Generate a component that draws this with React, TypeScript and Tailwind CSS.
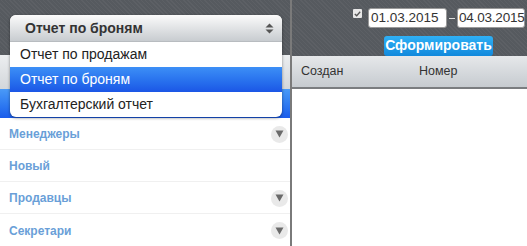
import React from "react";

const groups = [
  { name: "Менеджеры", arrow: true },
  { name: "Новый", arrow: false },
  { name: "Продавцы", arrow: true },
  { name: "Секретари", arrow: true },
];

const reports = ["Отчет по продажам", "Отчет по броням", "Бухгалтерский отчет"];

function ArrowBadge() {
  return (
    <div className="w-[17px] h-[17px] rounded-full bg-[#e9e9e9] flex items-center justify-center">
      <svg width="9" height="8" viewBox="0 0 9 8">
        <path d="M0.5 0.5 L8.5 0.5 L4.5 7.5 Z" fill="#6a6a6a" />
      </svg>
    </div>
  );
}

export default function App() {
  return (
    <div className="w-[527px] h-[246px] flex overflow-hidden bg-white font-['Liberation_Sans',Arial,sans-serif]">
      {/* left column */}
      <div className="relative w-[292px] flex flex-col border-r-2 border-[#7a7a7a]">
        <div className="h-[56px] bg-[#565a5f] bg-[repeating-linear-gradient(45deg,rgba(255,255,255,0.04)_0_1px,transparent_1px_3px)]"></div>
        <div className="h-[34px] bg-gradient-to-b from-[#eceef0] to-[#d3d7db]"></div>
        <div className="h-[30px] bg-gradient-to-b from-[#4a9af7] to-[#1b5ceb]"></div>
        {groups.map((g, i) => (
          <div
            key={g.name}
            className={`h-[32px] shrink-0 flex items-center justify-between pl-[9px] pr-[2px] pt-[1px] ${i < groups.length - 1 ? "border-b border-[#f0f0f0]" : ""}`}
          >
            <span className="text-[12px] font-bold text-[#6a9fd8]">{g.name}</span>
            {g.arrow && <ArrowBadge />}
          </div>
        ))}

        {/* open select */}
        <div className="absolute left-[10px] top-[15px] w-[272px] rounded-[6px] bg-white shadow-[0_1px_3px_rgba(0,0,0,0.45)] overflow-hidden">
          <div className="h-[27px] flex items-center justify-between pl-[15px] pr-[8px] bg-gradient-to-b from-[#fbfbfb] to-[#c8ccd0] border-b border-[#b8bcc0]">
            <span className="text-[14px] font-bold text-[#333]">Отчет по броням</span>
            <svg width="9" height="11" viewBox="0 0 9 11">
              <path d="M4.5 0.5 L8.5 4.5 L0.5 4.5 Z" fill="#555" />
              <path d="M0.5 6.5 L8.5 6.5 L4.5 10.5 Z" fill="#555" />
            </svg>
          </div>
          {reports.map((r, i) => (
            <div
              key={r}
              className={`h-[25px] flex items-center pl-[10px] text-[14px] ${i === 1 ? "bg-gradient-to-b from-[#3d8ff6] to-[#1c56e6] text-white" : "text-[#222]"}`}
            >
              {r}
            </div>
          ))}
        </div>
      </div>

      {/* right column */}
      <div className="flex-1 flex flex-col">
        <div className="h-[56px] bg-[#565a5f] bg-[repeating-linear-gradient(45deg,rgba(255,255,255,0.04)_0_1px,transparent_1px_3px)] flex flex-col pt-[8px]">
          <div className="flex items-center justify-end pr-[2px]">
            <div className="w-[9px] h-[9px] bg-[#e8e8e8] rounded-[1px] flex items-center justify-center mr-[6px] self-start mt-[1px]">
              <svg width="7" height="6" viewBox="0 0 7 6">
                <path d="M0.8 3 L2.7 4.8 L6.2 0.8" stroke="#555" strokeWidth="1.3" fill="none" />
              </svg>
            </div>
            <div className="w-[79px] h-[20px] bg-white rounded-[3px] border border-[#999] flex items-center px-[2px] text-[13.5px] text-[#333] whitespace-nowrap">
              01.03.2015
            </div>
            <div className="w-[6px] h-[1px] bg-[#ddd] mx-[2px]"></div>
            <div className="w-[68px] h-[20px] bg-white rounded-[3px] border border-[#999] flex items-center px-[1px] text-[13.5px] text-[#333] whitespace-nowrap tracking-[-0.2px]">
              04.03.2015
            </div>
          </div>
          <div className="pl-[92px] mt-[5px]">
            <div className="inline-flex h-[20px] w-[109px] items-center justify-center rounded-[3px] bg-gradient-to-b from-[#2fb0f5] to-[#1189dc] text-white text-[14px] font-bold">
              Сформировать
            </div>
          </div>
        </div>
        <div className="h-[33px] flex items-center bg-gradient-to-b from-[#e6e8ea] to-[#c6cbd0] border-b-2 border-[#7a7d80] text-[12.5px] text-[#333]">
          <span className="ml-[9px] w-[118px]">Создан</span>
          <span>Номер</span>
        </div>
        <div className="flex-1 bg-white"></div>
      </div>
    </div>
  );
}
